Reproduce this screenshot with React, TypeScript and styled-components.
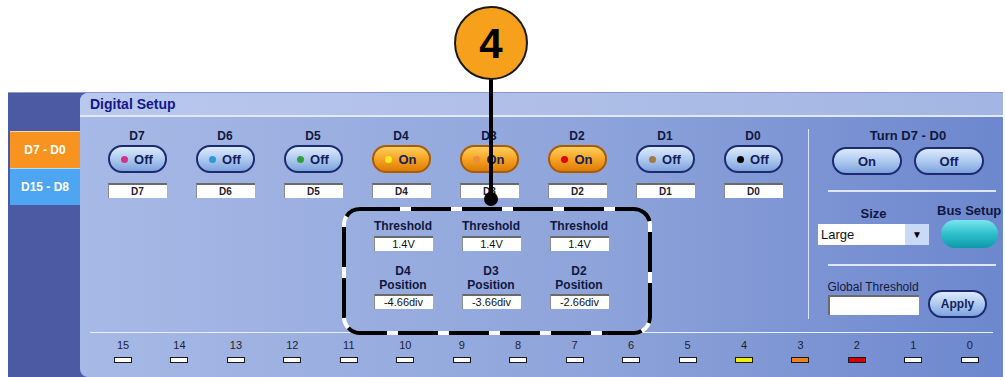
import styled, { createGlobalStyle } from "styled-components";

const GlobalStyle = createGlobalStyle`
    body {
        margin: 0;
        background: #ffffff;
        font-family: "Liberation Sans", Arial, sans-serif;
    }
`;

const Page = styled.div`
    position: relative;
    width: 1005px;
    height: 377px;
    padding: 92px 0 0 8px;
    box-sizing: border-box;
    overflow: hidden;
`;

const Frame = styled.div`
    display: flex;
    width: 995px;
    height: 285px;
    background: #4b5aa3;
    border-top: 1px solid #8a98d0;
    box-sizing: border-box;
`;

const TabStrip = styled.div`
    width: 72px;
    padding: 38px 0 0 2px;
    box-sizing: border-box;
    display: flex;
    flex-direction: column;
`;

type tabProps = {
    color: string;
};

const Tab = styled.div<tabProps>`
    height: 37px;
    display: flex;
    align-items: center;
    justify-content: center;
    background: ${(props) => props.color};
    border-top: 1px solid rgba(255, 255, 255, 0.6);
    box-sizing: border-box;
    color: #ffffff;
    font-weight: bold;
    font-size: 12px;
`;

const Panel = styled.div`
    flex: 1;
    display: flex;
    flex-direction: column;
    border-radius: 8px 0 0 8px;
    background: linear-gradient(90deg, #a7b9e6 0%, #8ea4da 55%, #6d87ce 100%);
    overflow: hidden;
`;

const Header = styled.div`
    height: 22px;
    padding-left: 10px;
    display: flex;
    align-items: center;
    background: linear-gradient(90deg, #b9c8ed 0%, #a3b5e2 100%);
    border-bottom: 2px solid #e0e8f9;
    color: #16168a;
    font-weight: bold;
    font-size: 14px;
`;

const Body = styled.div`
    display: flex;
    height: 215px;
`;

const Channels = styled.div`
    width: 728px;
    flex: none;
    display: grid;
    grid-template-columns: repeat(8, 88px);
    align-content: start;
    padding: 12px 0 0 13px;
    box-sizing: border-box;
`;

const ChannelCol = styled.div`
    display: flex;
    flex-direction: column;
    align-items: center;
`;

const Label = styled.div`
    font-weight: bold;
    font-size: 12px;
    line-height: 14px;
    color: #10173f;
    text-align: center;
`;

type toggleProps = {
    $on?: boolean;
    $w?: number;
};

const Toggle = styled.div<toggleProps>`
    width: ${(props) => props.$w ?? 59}px;
    height: 28px;
    margin-top: 2px;
    border-radius: 14px;
    box-sizing: border-box;
    border: 2px solid ${(props) => (props.$on ? "#a85c08" : "#1c2a70")};
    background: ${(props) =>
        props.$on
            ? "linear-gradient(#ffcf5a 0%, #f7a326 50%, #dd7d06 100%)"
            : "linear-gradient(#dceafc 0%, #aecaf0 50%, #7ea2de 100%)"};
    display: flex;
    align-items: center;
    justify-content: center;
    gap: 6px;
    font-weight: bold;
    font-size: 13px;
    color: #15205a;
`;

const Dot = styled.span<{ color: string }>`
    width: 7px;
    height: 7px;
    border-radius: 50%;
    background: ${(props) => props.color};
`;

const NameBox = styled.div`
    width: 59px;
    height: 15px;
    margin-top: 10px;
    box-sizing: border-box;
    background: #ffffff;
    border-top: 2px solid #6a6a6a;
    border-left: 1px solid #8c8c8c;
    font-weight: bold;
    font-size: 10px;
    line-height: 13px;
    text-align: center;
    color: #1e2030;
`;

const Callbox = styled.div`
    position: relative;
    grid-column: 4 / span 3;
    justify-self: start;
    width: 310px;
    height: 128px;
    margin: 9px 0 0 -15px;
    padding: 12px 0 0 17px;
    box-sizing: border-box;
    display: grid;
    grid-template-columns: repeat(3, 88px);
`;

const Dashes = styled.svg`
    position: absolute;
    left: 0;
    top: 0;
    width: 310px;
    height: 128px;
`;

const ThreshCol = styled.div`
    position: relative;
    display: flex;
    flex-direction: column;
    align-items: center;
`;

const ValueBox = styled(NameBox)<{ $top: number }>`
    margin-top: ${(props) => props.$top}px;
    font-weight: normal;
    font-size: 11px;
    color: #111;
`;

const Divider = styled.div`
    width: 1px;
    height: 190px;
    margin-top: 12px;
    background: #dbe3f6;
`;

const RightSection = styled.div`
    flex: 1;
    padding: 12px 0 0 9px;
    display: flex;
    flex-direction: column;
`;

const TurnGroup = styled.div`
    width: 180px;
    display: flex;
    flex-direction: column;
    align-items: center;
`;

const Title = styled.div`
    font-weight: bold;
    font-size: 13px;
    line-height: 14px;
    color: #10173f;
`;

const ButtonRow = styled.div`
    display: flex;
    gap: 12px;
    margin-top: 2px;
`;

const Rule = styled.div`
    width: 168px;
    height: 2px;
    margin-left: 10px;
    background: #dfe6f7;
`;

const SizeRow = styled.div`
    display: flex;
    align-items: flex-start;
`;

const SizeCol = styled.div`
    width: 111px;
    display: flex;
    flex-direction: column;
    align-items: center;
`;

const Select = styled.div`
    width: 111px;
    height: 21px;
    margin-top: 3px;
    display: flex;
    background: #ffffff;
    font-size: 13px;
`;

const SelectText = styled.div`
    flex: 1;
    padding-left: 3px;
    line-height: 21px;
    color: #111;
`;

const SelectArrow = styled.div`
    width: 24px;
    background: #c9daf7;
    display: flex;
    align-items: center;
    justify-content: center;
    font-size: 10px;
    color: #000;
`;

const BusCol = styled.div`
    margin: -3px 0 0 8px;
    display: flex;
    flex-direction: column;
    align-items: center;
`;

const TealButton = styled.div`
    width: 57px;
    height: 28px;
    margin-top: 2px;
    border-radius: 14px;
    background: linear-gradient(#7ae6ee 0%, #2cc0cc 50%, #0e98a8 100%);
`;

const GlobalRow = styled.div`
    display: flex;
    align-items: flex-start;
    margin-top: 14px;
`;

const GlobalCol = styled.div`
    width: 110px;
    display: flex;
    flex-direction: column;
    align-items: center;
`;

const PlainLabel = styled.div`
    font-size: 12px;
    line-height: 14px;
    color: #14193d;
`;

const Input = styled.div`
    width: 91px;
    height: 20px;
    margin-top: 1px;
    box-sizing: border-box;
    background: #ffffff;
    border-top: 2px solid #6a6a6a;
    border-left: 2px solid #6a6a6a;
`;

const BitsSep = styled.div`
    height: 1px;
    margin: 0 10px;
    background: #eaf0fb;
`;

const BitsRow = styled.div`
    display: flex;
    justify-content: space-between;
    padding: 6px 23px 0 33px;
`;

const Bit = styled.div`
    width: 20px;
    display: flex;
    flex-direction: column;
    align-items: center;
`;

const BitNum = styled.div`
    font-size: 11px;
    line-height: 12px;
    color: #1c1f30;
`;

const BitMark = styled.div<{ color: string }>`
    width: 18px;
    height: 6px;
    margin-top: 6px;
    box-sizing: border-box;
    border: 1px solid #1a1a1a;
    background: ${(props) => props.color};
`;

const Callout = styled.svg`
    position: absolute;
    left: 450px;
    top: 0;
    width: 84px;
    height: 212px;
`;

const channels = [
    { name: "D7", on: false, dot: "#d3318c" },
    { name: "D6", on: false, dot: "#2b9ad6" },
    { name: "D5", on: false, dot: "#2f9e42" },
    { name: "D4", on: true, dot: "#f2ea1a" },
    { name: "D3", on: true, dot: "#e8903a" },
    { name: "D2", on: true, dot: "#e00000" },
    { name: "D1", on: false, dot: "#a27a44" },
    { name: "D0", on: false, dot: "#000000" },
];

const thresholds = [
    { name: "D4", pos: "-4.66div" },
    { name: "D3", pos: "-3.66div" },
    { name: "D2", pos: "-2.66div" },
];

const bitColors: Record<number, string> = { 4: "#f2ee10", 3: "#f0801e", 2: "#d40000" };

export default function App() {
    const bits = Array.from({ length: 16 }, (_, i) => 15 - i);
    return (
        <Page>
            <GlobalStyle />
            <Frame>
                <TabStrip>
                    <Tab color="#f7931e">D7 - D0</Tab>
                    <Tab color="#4ea6f2">D15 - D8</Tab>
                </TabStrip>
                <Panel>
                    <Header>Digital Setup</Header>
                    <Body>
                        <Channels>
                            {channels.map((c) => (
                                <ChannelCol key={c.name}>
                                    <Label>{c.name}</Label>
                                    <Toggle $on={c.on}>
                                        <Dot color={c.dot} />
                                        {c.on ? "On" : "Off"}
                                    </Toggle>
                                    <NameBox>{c.name}</NameBox>
                                </ChannelCol>
                            ))}
                            <Callbox>
                                <Dashes viewBox="0 0 310 128">
                                    <rect x="2" y="2" width="306" height="124" rx="16" fill="none" stroke="#ffffff" strokeWidth="4" />
                                    <rect x="2" y="2" width="306" height="124" rx="16" fill="none" stroke="#000000" strokeWidth="4" strokeDasharray="40 11" />
                                </Dashes>
                                {thresholds.map((t) => (
                                    <ThreshCol key={t.name}>
                                        <Label>Threshold</Label>
                                        <ValueBox $top={3}>1.4V</ValueBox>
                                        <Label style={{ marginTop: 13 }}>{t.name}<br />Position</Label>
                                        <ValueBox $top={2}>{t.pos}</ValueBox>
                                    </ThreshCol>
                                ))}
                            </Callbox>
                        </Channels>
                        <Divider />
                        <RightSection>
                            <TurnGroup>
                                <Title>Turn D7 - D0</Title>
                                <ButtonRow>
                                    <Toggle $w={70}>On</Toggle>
                                    <Toggle $w={70}>Off</Toggle>
                                </ButtonRow>
                            </TurnGroup>
                            <Rule style={{ marginTop: 15 }} />
                            <SizeRow>
                                <SizeCol>
                                    <Title style={{ marginTop: 15 }}>Size</Title>
                                    <Select>
                                        <SelectText>Large</SelectText>
                                        <SelectArrow>▼</SelectArrow>
                                    </Select>
                                </SizeCol>
                                <BusCol>
                                    <Title style={{ marginTop: 15 }}>Bus Setup</Title>
                                    <TealButton />
                                </BusCol>
                            </SizeRow>
                            <Rule style={{ marginTop: 16 }} />
                            <GlobalRow>
                                <GlobalCol>
                                    <PlainLabel>Global Threshold</PlainLabel>
                                    <Input />
                                </GlobalCol>
                                <Toggle $w={59} style={{ marginTop: 10, fontSize: 12 }}>Apply</Toggle>
                            </GlobalRow>
                        </RightSection>
                    </Body>
                    <BitsSep />
                    <BitsRow>
                        {bits.map((b) => (
                            <Bit key={b}>
                                <BitNum>{b}</BitNum>
                                <BitMark color={bitColors[b] ?? "#ffffff"} />
                            </Bit>
                        ))}
                    </BitsRow>
                </Panel>
            </Frame>
            <Callout viewBox="0 0 84 212">
                <line x1="41" y1="79" x2="41" y2="199" stroke="#000" strokeWidth="4" />
                <circle cx="41" cy="199" r="7" fill="#000" />
                <circle cx="41" cy="43" r="36" fill="#f7a01c" stroke="#1a1a1a" strokeWidth="2" />
                <text x="41" y="58" textAnchor="middle" fontFamily="Liberation Sans, Arial, sans-serif" fontWeight="bold" fontSize="42" fill="#000">4</text>
            </Callout>
        </Page>
    );
}
